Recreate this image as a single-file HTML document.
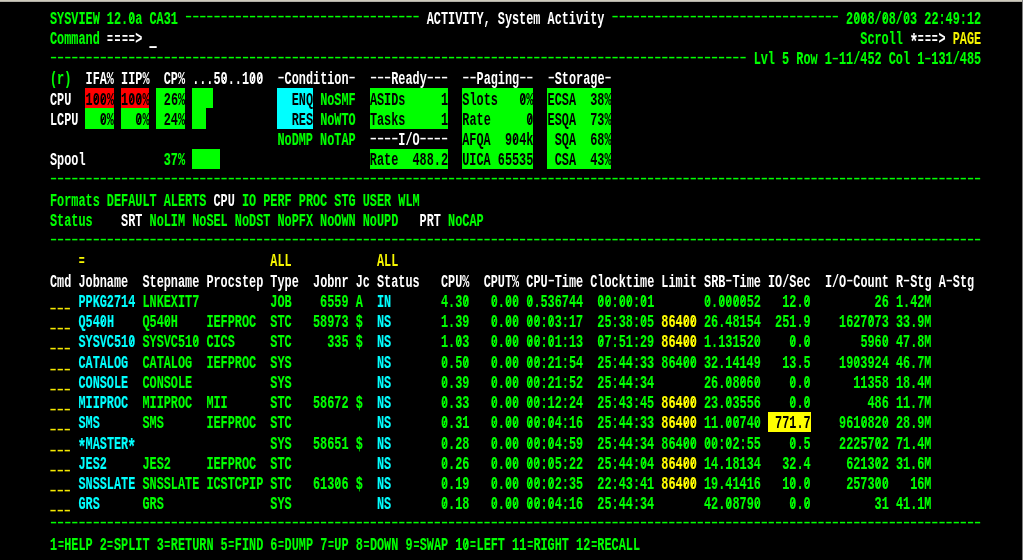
<!DOCTYPE html>
<html><head><meta charset="utf-8"><title>SYSVIEW 12.0a - ACTIVITY, System Activity</title>
<style>
html,body{margin:0;padding:0;background:#000;}
body{width:1024px;height:560px;position:relative;overflow:hidden;font-family:"Liberation Mono",monospace;}
#top{position:absolute;left:0;top:0;width:1024px;height:2px;background:linear-gradient(#cecabc 0,#cecabc 1px,#b0aea5 1px,#b0aea5 2px);}
#rt1{position:absolute;left:1022px;top:0;width:1px;height:560px;background:#808080;}
#rt2{position:absolute;left:1023px;top:0;width:1px;height:560px;background:#fff;}
#txt{position:absolute;left:0;top:0;width:1022px;height:560px;filter:blur(0.35px);}
.b{position:absolute;}
.R{background:#ff0000;} .G{background:#00ff00;} .C{background:#00ffff;} .Y{background:#ffff00;}
.r{position:absolute;left:49.75px;height:19.94px;line-height:19.94px;white-space:pre;
font:bold 17.6px/19.94px "Liberation Mono",monospace;transform:scaleX(0.6732);transform-origin:0 0;color:#00ff00;-webkit-text-stroke:0.15px;}
.g{color:#00ff00;} .w{color:#ffffff;-webkit-text-stroke:0;} .y{color:#f6f600;-webkit-text-stroke:0;} .yb{color:#ffff00;} .c{color:#00ffff;} .k{color:#000000;-webkit-text-stroke:0;}
.d{display:inline-block;position:relative;top:-2.2px;transform:scaleY(.78);-webkit-text-stroke:0;}
.h{top:-1.5px;}
.u{display:inline-block;position:relative;top:5.9px;left:-0.7px;color:#f4e800;transform:scaleY(.85);-webkit-text-stroke:0;}
.cur{position:relative;top:8.1px;color:#fff;}
.a{display:inline-block;position:relative;top:4.4px;transform:scale(1.25);}
i{font-style:normal;background:linear-gradient(to bottom right,transparent calc(50% - 0.75px),currentColor calc(50% - 0.75px),currentColor calc(50% + 0.75px),transparent calc(50% + 0.75px)) 3.1px 5.2px/4.4px 7.6px no-repeat;}
.q{display:inline-block;transform:translateY(0.8px) scale(.84,.9);}

</style></head><body>
<div id="top"></div><div id="rt1"></div><div id="rt2"></div>
<div id="txt">
<div class="b R" style="left:85.3px;top:88.21px;width:28.44px;height:20.24px"></div>
<div class="b R" style="left:120.85px;top:88.21px;width:28.44px;height:20.24px"></div>
<div class="b G" style="left:156.4px;top:88.21px;width:28.44px;height:40.48px"></div>
<div class="b G" style="left:191.95px;top:88.21px;width:14.22px;height:40.48px"></div>
<div class="b G" style="left:205.46px;top:88.21px;width:7.82px;height:20.24px"></div>
<div class="b C" style="left:277.27px;top:88.21px;width:35.55px;height:40.48px"></div>
<div class="b G" style="left:369.7px;top:88.21px;width:78.21px;height:40.48px"></div>
<div class="b G" style="left:462.13px;top:88.21px;width:71.1px;height:80.96px"></div>
<div class="b G" style="left:547.45px;top:88.21px;width:63.99px;height:80.96px"></div>
<div class="b G" style="left:85.3px;top:108.45px;width:28.44px;height:20.24px"></div>
<div class="b G" style="left:120.85px;top:108.45px;width:28.44px;height:20.24px"></div>
<div class="b G" style="left:191.95px;top:148.93px;width:28.44px;height:20.24px"></div>
<div class="b G" style="left:369.7px;top:148.93px;width:78.21px;height:20.24px"></div>
<div class="b Y" style="left:767.86px;top:412.05px;width:42.66px;height:20.24px"></div>
<div class="r" style="top:9.6px">SYSVIEW 12.<i>0</i>a CA31 <span class="d">–––––––––––––––––––––––––––––––––</span> <span class="w">ACTIVITY, System Activity</span> <span class="d">––––––––––––––––––––––––––––––––</span> 2<i>0</i><i>0</i>8/<i>0</i>8/<i>0</i>3 22:49:12</div>
<div class="r" style="top:29.84px">Command <span class="w"><span class="q">=</span><span class="q">=</span><span class="q">=</span><span class="q">=</span>&gt; <span class="cur">—</span></span>                                                                                                   Scroll <span class="w"><span class="a">*</span><span class="q">=</span><span class="q">=</span><span class="q">=</span>&gt;</span> <span class="y">PAGE</span></div>
<div class="r" style="top:50.08px"><span class="d">––––––––––––––––––––––––––––––––––––––––––––––––––––––––––––––––––––––––––––––––––––––––––––––––––</span> Lvl 5 Row 1<span class="d h">–</span>11/452 Col 1<span class="d h">–</span>131/485</div>
<div class="r" style="top:70.32px">(r)  <span class="w">IFA% IIP%  CP% ...5<i>0</i>..1<i>0</i><i>0</i>  <span class="d">–</span>Condition<span class="d">–</span>  <span class="d">–––</span>Ready<span class="d">–––</span>  <span class="d">––</span>Paging<span class="d">––</span>  <span class="d">–</span>Storage<span class="d">–</span></span></div>
<div class="r" style="top:90.56px"><span class="w">CPU</span>  <span class="k">1<i>0</i><i>0</i>%</span> <span class="k">1<i>0</i><i>0</i>%</span> <span class="k"> 26%</span>             <span class="k">  ENQ</span> NoSMF  <span class="k">ASIDs     1</span>  <span class="k">Slots   <i>0</i>%</span>  <span class="k">ECSA  38%</span></div>
<div class="r" style="top:110.8px"><span class="w">LCPU</span> <span class="k">  <i>0</i>%</span> <span class="k">  <i>0</i>%</span> <span class="k"> 24%</span>             <span class="k">  RES</span> NoWTO  <span class="k">Tasks     1</span>  <span class="k">Rate     <i>0</i></span>  <span class="k">ESQA  73%</span></div>
<div class="r" style="top:131.04px">                                NoDMP NoTAP  <span class="w"><span class="d">––––</span>I/O<span class="d">––––</span></span>  <span class="k">AFQA  9<i>0</i>4k</span>  <span class="k"> SQA  68%</span></div>
<div class="r" style="top:151.28px"><span class="w">Spool</span>           37%                          <span class="k">Rate  488.2</span>  <span class="k">UICA 65535</span>  <span class="k"> CSA  43%</span></div>
<div class="r" style="top:171.52px"><span class="d">–––––––––––––––––––––––––––––––––––––––––––––––––––––––––––––––––––––––––––––––––––––––––––––––––––––––––––––––––––––––––––––––––––</span></div>
<div class="r" style="top:191.76px">Formats DEFAULT ALERTS <span class="w">CPU</span> IO PERF PROC STG USER WLM</div>
<div class="r" style="top:212px">Status    <span class="w">SRT</span> NoLIM NoSEL NoDST NoPFX NoOWN NoUPD   <span class="w">PRT</span> NoCAP</div>
<div class="r" style="top:232.24px"><span class="d">–––––––––––––––––––––––––––––––––––––––––––––––––––––––––––––––––––––––––––––––––––––––––––––––––––––––––––––––––––––––––––––––––––</span></div>
<div class="r" style="top:252.48px">    <span class="y"><span class="q">=</span></span>                          <span class="y">ALL</span>            <span class="y">ALL</span></div>
<div class="r" style="top:272.72px"><span class="w">Cmd</span> <span class="w">Jobname</span>  <span class="w">Stepname</span> <span class="w">Procstep</span> <span class="w">Type</span>  <span class="w">Jobnr</span> <span class="w">Jc</span> <span class="w">Status</span>   <span class="w">CPU%</span>  <span class="w">CPUT%</span> <span class="w">CPU<span class="d h">–</span>Time</span> <span class="w">Clocktime</span> <span class="w">Limit</span> <span class="w">SRB<span class="d h">–</span>Time</span> <span class="w">IO/Sec</span>  <span class="w">I/O<span class="d h">–</span>Count</span> <span class="w">R<span class="d h">–</span>Stg</span> <span class="w">A<span class="d h">–</span>Stg</span></div>
<div class="r" style="top:292.96px"><span class="u">–––</span> <span class="c">PPKG2714</span> LNKEXIT7          JOB    6559 A  <span class="c">IN</span>       4.3<i>0</i>   <i>0</i>.<i>0</i><i>0</i> <i>0</i>.536744  <i>0</i><i>0</i>:<i>0</i><i>0</i>:<i>0</i>1       <i>0</i>.<i>0</i><i>0</i><i>0</i><i>0</i>52   12.<i>0</i>         26 1.42M</div>
<div class="r" style="top:313.2px"><span class="u">–––</span> <span class="c">Q54<i>0</i>H</span>    Q54<i>0</i>H    IEFPROC  STC   58973 $  <span class="c">NS</span>       1.39   <i>0</i>.<i>0</i><i>0</i> <i>0</i><i>0</i>:<i>0</i>3:17  25:38:<i>0</i>5 <span class="yb">864<i>0</i><i>0</i></span> 26.48154  251.9    1627<i>0</i>73 33.9M</div>
<div class="r" style="top:333.44px"><span class="u">–––</span> <span class="c">SYSVC51<i>0</i></span> SYSVC51<i>0</i> CICS     STC     335 $  <span class="c">NS</span>       1.<i>0</i>3   <i>0</i>.<i>0</i><i>0</i> <i>0</i><i>0</i>:<i>0</i>1:13  <i>0</i>7:51:29 <span class="yb">864<i>0</i><i>0</i></span> 1.13152<i>0</i>    <i>0</i>.<i>0</i>       596<i>0</i> 47.8M</div>
<div class="r" style="top:353.68px"><span class="u">–––</span> <span class="c">CATALOG</span>  CATALOG  IEFPROC  SYS            <span class="c">NS</span>       <i>0</i>.5<i>0</i>   <i>0</i>.<i>0</i><i>0</i> <i>0</i><i>0</i>:21:54  25:44:33 864<i>0</i><i>0</i> 32.14149   13.5    19<i>0</i>3924 46.7M</div>
<div class="r" style="top:373.92px"><span class="u">–––</span> <span class="c">CONSOLE</span>  CONSOLE           SYS            <span class="c">NS</span>       <i>0</i>.39   <i>0</i>.<i>0</i><i>0</i> <i>0</i><i>0</i>:21:52  25:44:34       26.<i>0</i>8<i>0</i>6<i>0</i>    <i>0</i>.<i>0</i>      11358 18.4M</div>
<div class="r" style="top:394.16px"><span class="u">–––</span> <span class="c">MIIPROC</span>  MIIPROC  MII      STC   58672 $  <span class="c">NS</span>       <i>0</i>.33   <i>0</i>.<i>0</i><i>0</i> <i>0</i><i>0</i>:12:24  25:43:45 <span class="yb">864<i>0</i><i>0</i></span> 23.<i>0</i>3556    <i>0</i>.<i>0</i>        486 11.7M</div>
<div class="r" style="top:414.4px"><span class="u">–––</span> <span class="c">SMS</span>      SMS      IEFPROC  STC            <span class="c">NS</span>       <i>0</i>.31   <i>0</i>.<i>0</i><i>0</i> <i>0</i><i>0</i>:<i>0</i>4:16  25:44:33 <span class="yb">864<i>0</i><i>0</i></span> 11.<i>0</i><i>0</i>74<i>0</i> <span class="k"> 771.7</span>    961<i>0</i>82<i>0</i> 28.9M</div>
<div class="r" style="top:434.64px"><span class="u">–––</span> <span class="c"><span class="a">*</span>MASTER<span class="a">*</span></span>                   SYS   58651 $  <span class="c">NS</span>       <i>0</i>.28   <i>0</i>.<i>0</i><i>0</i> <i>0</i><i>0</i>:<i>0</i>4:59  25:44:34 864<i>0</i><i>0</i> <i>0</i><i>0</i>:<i>0</i>2:55    <i>0</i>.5    22257<i>0</i>2 71.4M</div>
<div class="r" style="top:454.88px"><span class="u">–––</span> <span class="c">JES2</span>     JES2     IEFPROC  STC            <span class="c">NS</span>       <i>0</i>.26   <i>0</i>.<i>0</i><i>0</i> <i>0</i><i>0</i>:<i>0</i>5:22  25:44:<i>0</i>4 <span class="yb">864<i>0</i><i>0</i></span> 14.18134   32.4     6213<i>0</i>2 31.6M</div>
<div class="r" style="top:475.12px"><span class="u">–––</span> <span class="c">SNSSLATE</span> SNSSLATE ICSTCPIP STC   613<i>0</i>6 $  <span class="c">NS</span>       <i>0</i>.19   <i>0</i>.<i>0</i><i>0</i> <i>0</i><i>0</i>:<i>0</i>2:35  22:43:41 <span class="yb">864<i>0</i><i>0</i></span> 19.41416   1<i>0</i>.<i>0</i>     2573<i>0</i><i>0</i>   16M</div>
<div class="r" style="top:495.36px"><span class="u">–––</span> <span class="c">GRS</span>      GRS               SYS            <span class="c">NS</span>       <i>0</i>.18   <i>0</i>.<i>0</i><i>0</i> <i>0</i><i>0</i>:<i>0</i>4:16  25:44:34       42.<i>0</i>879<i>0</i>    <i>0</i>.<i>0</i>         31 41.1M</div>
<div class="r" style="top:515.6px"><span class="d">–––––––––––––––––––––––––––––––––––––––––––––––––––––––––––––––––––––––––––––––––––––––––––––––––––––––––––––––––––––––––––––––––––</span></div>
<div class="r" style="top:535.84px">1<span class="q">=</span>HELP 2<span class="q">=</span>SPLIT 3<span class="q">=</span>RETURN 5<span class="q">=</span>FIND 6<span class="q">=</span>DUMP 7<span class="q">=</span>UP 8<span class="q">=</span>DOWN 9<span class="q">=</span>SWAP 1<i>0</i><span class="q">=</span>LEFT 11<span class="q">=</span>RIGHT 12<span class="q">=</span>RECALL</div>
</div>
</body></html>
